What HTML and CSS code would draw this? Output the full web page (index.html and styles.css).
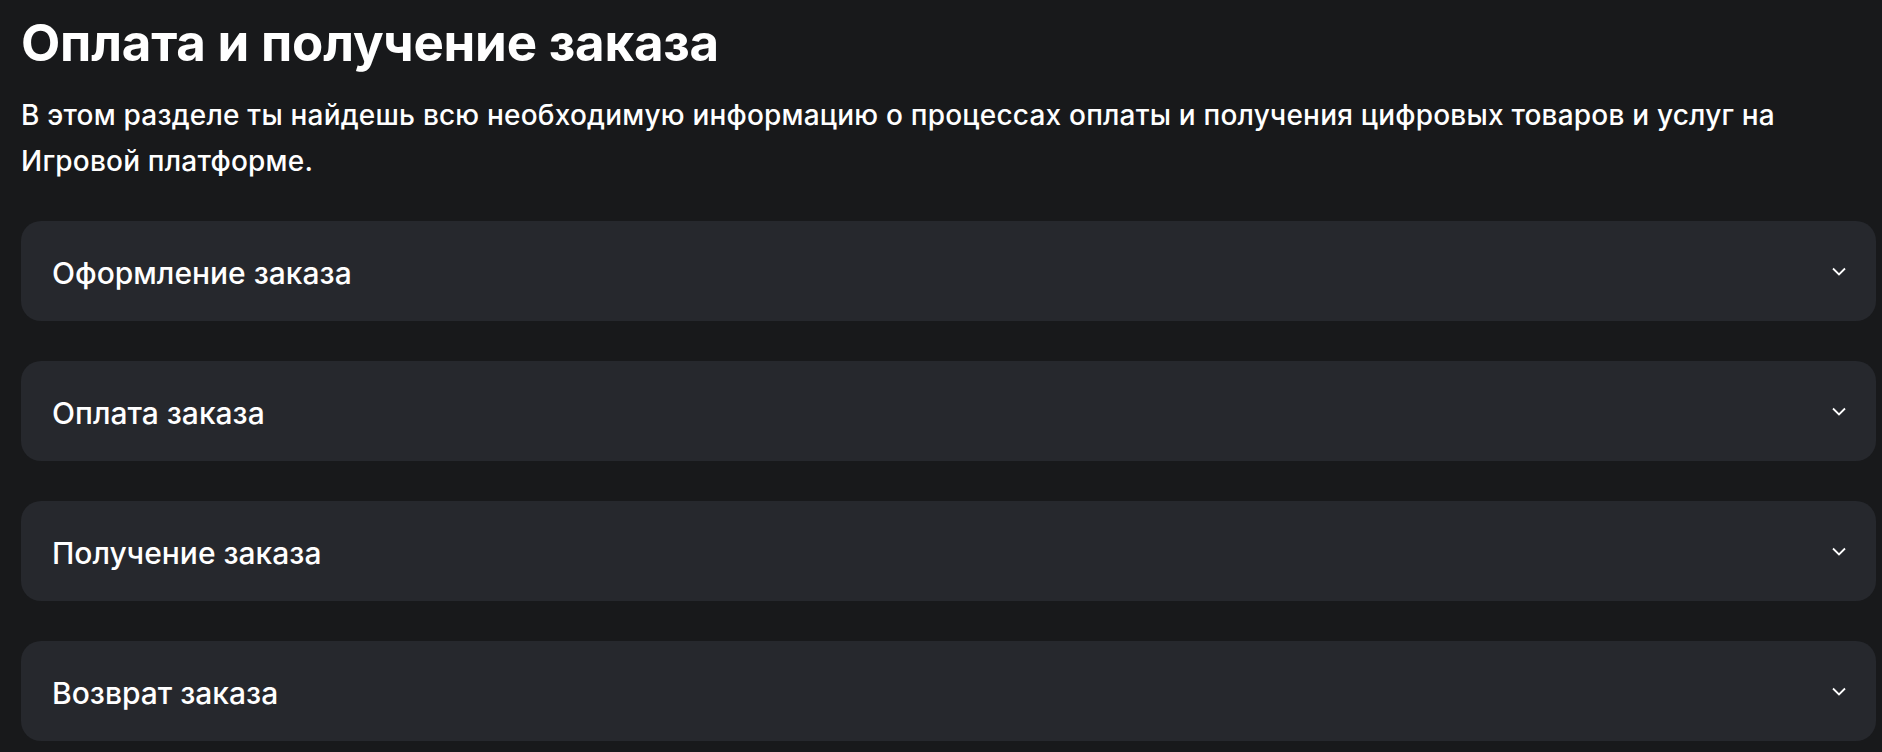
FILE: index.html
```html
<!DOCTYPE html>
<html lang="ru">
<head>
<meta charset="utf-8">
<title>Оплата и получение заказа</title>
<link rel="stylesheet" href="styles.css">
</head>
<body>
<main class="page">
  <h1 class="title">Оплата и получение заказа</h1>
  <p class="lead">В этом разделе ты найдешь всю необходимую информацию о процессах оплаты и получения цифровых товаров и услуг на Игровой платформе.</p>
  <div class="faq">
    <div class="item"><span class="item-title">Оформление заказа</span><svg class="chev" width="14" height="9" viewBox="0 0 14 9"><path d="M1 1.5l6 6 6-6" fill="none" stroke="#fff" stroke-width="1.8"/></svg></div>
    <div class="item"><span class="item-title">Оплата заказа</span><svg class="chev" width="14" height="9" viewBox="0 0 14 9"><path d="M1 1.5l6 6 6-6" fill="none" stroke="#fff" stroke-width="1.8"/></svg></div>
    <div class="item"><span class="item-title">Получение заказа</span><svg class="chev" width="14" height="9" viewBox="0 0 14 9"><path d="M1 1.5l6 6 6-6" fill="none" stroke="#fff" stroke-width="1.8"/></svg></div>
    <div class="item"><span class="item-title">Возврат заказа</span><svg class="chev" width="14" height="9" viewBox="0 0 14 9"><path d="M1 1.5l6 6 6-6" fill="none" stroke="#fff" stroke-width="1.8"/></svg></div>
  </div>
</main>
</body>
</html>
```
FILE: styles.css
```css
html, body {
  margin: 0;
  padding: 0;
  background: #18191b;
  color: #ffffff;
  font-family: "Inter", "Noto Sans", sans-serif;
}
.page {
  padding: 12px 6px 0 21px;
}
.title {
  margin: 0;
  font-size: 51px;
  line-height: 62px;
  font-weight: 700;
  letter-spacing: -0.2px;
}
.lead {
  margin: 18px 0 0;
  font-size: 28px;
  line-height: 46px;
  font-weight: 500;
  letter-spacing: 0.2px;
}
.faq {
  margin-top: 37px;
  display: flex;
  flex-direction: column;
  gap: 40px;
}
.item {
  height: 100px;
  box-sizing: border-box;
  padding: 0 30px 0 31px;
  background: #26282d;
  border-radius: 20px;
  display: flex;
  align-items: center;
  justify-content: space-between;
}
.item-title {
  font-size: 30px;
  font-weight: 500;
  padding-top: 3px;
}
.chev {
  display: block;
}
```
